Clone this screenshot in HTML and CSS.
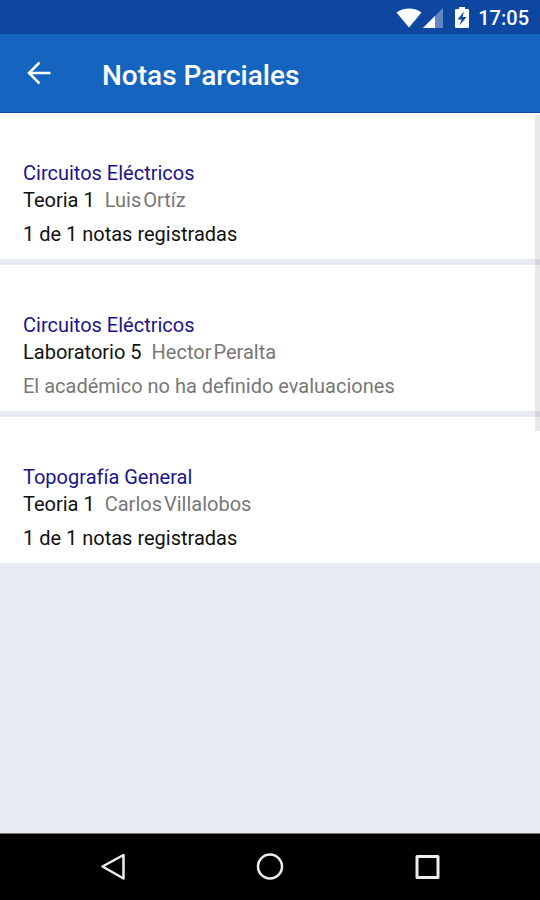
FILE: index.html
```html
<!DOCTYPE html>
<html lang="es">
<head>
<meta charset="utf-8">
<meta name="viewport" content="width=device-width, initial-scale=1">
<title>Notas Parciales</title>
<link rel="stylesheet" href="styles.css">
</head>
<body>
<div class="status-bar">
  <svg class="wifi" width="26" height="22" viewBox="0 0 26 22" aria-hidden="true"><path d="M0.5 5.5C7.5 0 18.500 0 25.500 5.500L13 20.500Z" fill="#fff"/></svg>
  <svg class="signal" width="20" height="22" viewBox="0 0 20 22" aria-hidden="true"><path d="M20 1V21H0Z" fill="#fff" opacity=".35"/><path d="M12 9V21H0Z" fill="#fff"/></svg>
  <svg class="battery" width="14" height="22" viewBox="0 0 14 22" aria-hidden="true"><path d="M4 0h6v2h3q1 0 1 1v17q0 1-1 1H1q-1 0-1-1V3q0-1 1-1h3z" fill="#fff"/><path d="M9 4.500L2.500 12.500H6.500L4.500 18.500L11.500 10H7.500Z" fill="#0d47a1"/></svg>
  <time class="clock">17:05</time>
</div>
<header class="app-bar">
  <button class="back" type="button" aria-label="Volver">
    <svg width="24" height="24" viewBox="0 0 24 24" fill="none" stroke="#fff" stroke-width="2.500" aria-hidden="true"><path d="M23.500 12H2M12.500 1.500L2 12L12.500 22.500"/></svg>
  </button>
  <h1 class="title">Notas Parciales</h1>
</header>
<main class="content">
  <div class="list">
    <article class="card">
      <h2 class="course">Circuitos Eléctricos</h2>
      <p class="section"><span class="group">Teoria 1</span><span class="teacher"><span>Luis</span> <span>Ortíz</span></span></p>
      <p class="status">1 de 1 notas registradas</p>
    </article>
    <article class="card">
      <h2 class="course">Circuitos Eléctricos</h2>
      <p class="section"><span class="group">Laboratorio 5</span><span class="teacher"><span>Hector</span> <span>Peralta</span></span></p>
      <p class="status muted">El académico no ha definido evaluaciones</p>
    </article>
    <article class="card">
      <h2 class="course">Topografía General</h2>
      <p class="section"><span class="group">Teoria 1</span><span class="teacher"><span>Carlos</span> <span>Villalobos</span></span></p>
      <p class="status">1 de 1 notas registradas</p>
    </article>
  </div>
  <div class="scroll-thumb"></div>
</main>
<nav class="nav-bar" aria-label="Sistema">
  <button type="button" aria-label="Atrás"><svg width="28" height="28" viewBox="0 0 28 28" fill="none" stroke="#eee" stroke-width="2.500" stroke-linejoin="round" aria-hidden="true"><path d="M24.500 2V25.500L3.500 13.500Z"/></svg></button>
  <button type="button" aria-label="Inicio"><svg width="28" height="28" viewBox="0 0 28 28" fill="none" stroke="#eee" stroke-width="2.500" aria-hidden="true"><circle cx="14" cy="13.500" r="12"/></svg></button>
  <button type="button" aria-label="Recientes"><svg width="28" height="28" viewBox="0 0 28 28" fill="none" stroke="#eee" stroke-width="3" stroke-linejoin="round" aria-hidden="true"><path d="M4 3.500H25V24.500H4Z"/></svg></button>
</nav>
</body>
</html>
```
FILE: styles.css
```css
* {
  box-sizing: border-box;
}

body {
  margin: 0;
  min-height: 100vh;
  display: flex;
  flex-direction: column;
  background: #e8eaf6;
  color: #111;
  font-family: Roboto, "Liberation Sans", sans-serif;
  font-size: 20px;
  line-height: 27px;
}

h1, h2, p {
  margin: 0;
  font-weight: 400;
}

h2 {
  font-size: 20px;
}

button {
  display: flex;
  align-items: center;
  justify-content: center;
  padding: 0;
  border: 0;
  background: none;
}

.status-bar {
  display: flex;
  align-items: center;
  justify-content: flex-end;
  height: 34px;
  padding: 2px 11px 0 0;
  background: #0d47a1;
  color: #fff;
}

.signal {
  margin-left: 1px;
}

.battery {
  margin-left: 12px;
}

.clock {
  margin-left: 9px;
  font-weight: 500;
}

.app-bar {
  display: flex;
  align-items: center;
  gap: 51px;
  height: 79px;
  padding: 0 27px;
  border-bottom: 1px solid #0d47a1;
  background: #1565c0;
}

.back {
  height: 48px;
}

.title {
  padding-top: 6px;
  color: #fff;
  font-size: 28px;
  font-weight: 500;
  line-height: 36px;
}

.content {
  position: relative;
  flex: 1;
}

.list {
  display: flex;
  flex-direction: column;
  gap: 6px;
}

.card {
  padding: 47px 23px 11px;
  background: #fff;
}

.course {
  color: #1a148c;
}

.section {
  display: flex;
  gap: 10px;
}

.teacher {
  display: flex;
  gap: 2px;
  color: #777;
}

.status {
  margin-top: 7px;
}

.muted {
  color: #777;
}

.scroll-thumb {
  position: absolute;
  top: 2px;
  right: 0;
  width: 5px;
  height: 316px;
  background: rgba(0, 0, 0, 0.09);
}

.nav-bar {
  display: grid;
  grid-template-columns: repeat(3, 1fr);
  height: 67px;
  padding: 0 34px;
  border-top: 1px solid #777;
  background: #000;
}
```
